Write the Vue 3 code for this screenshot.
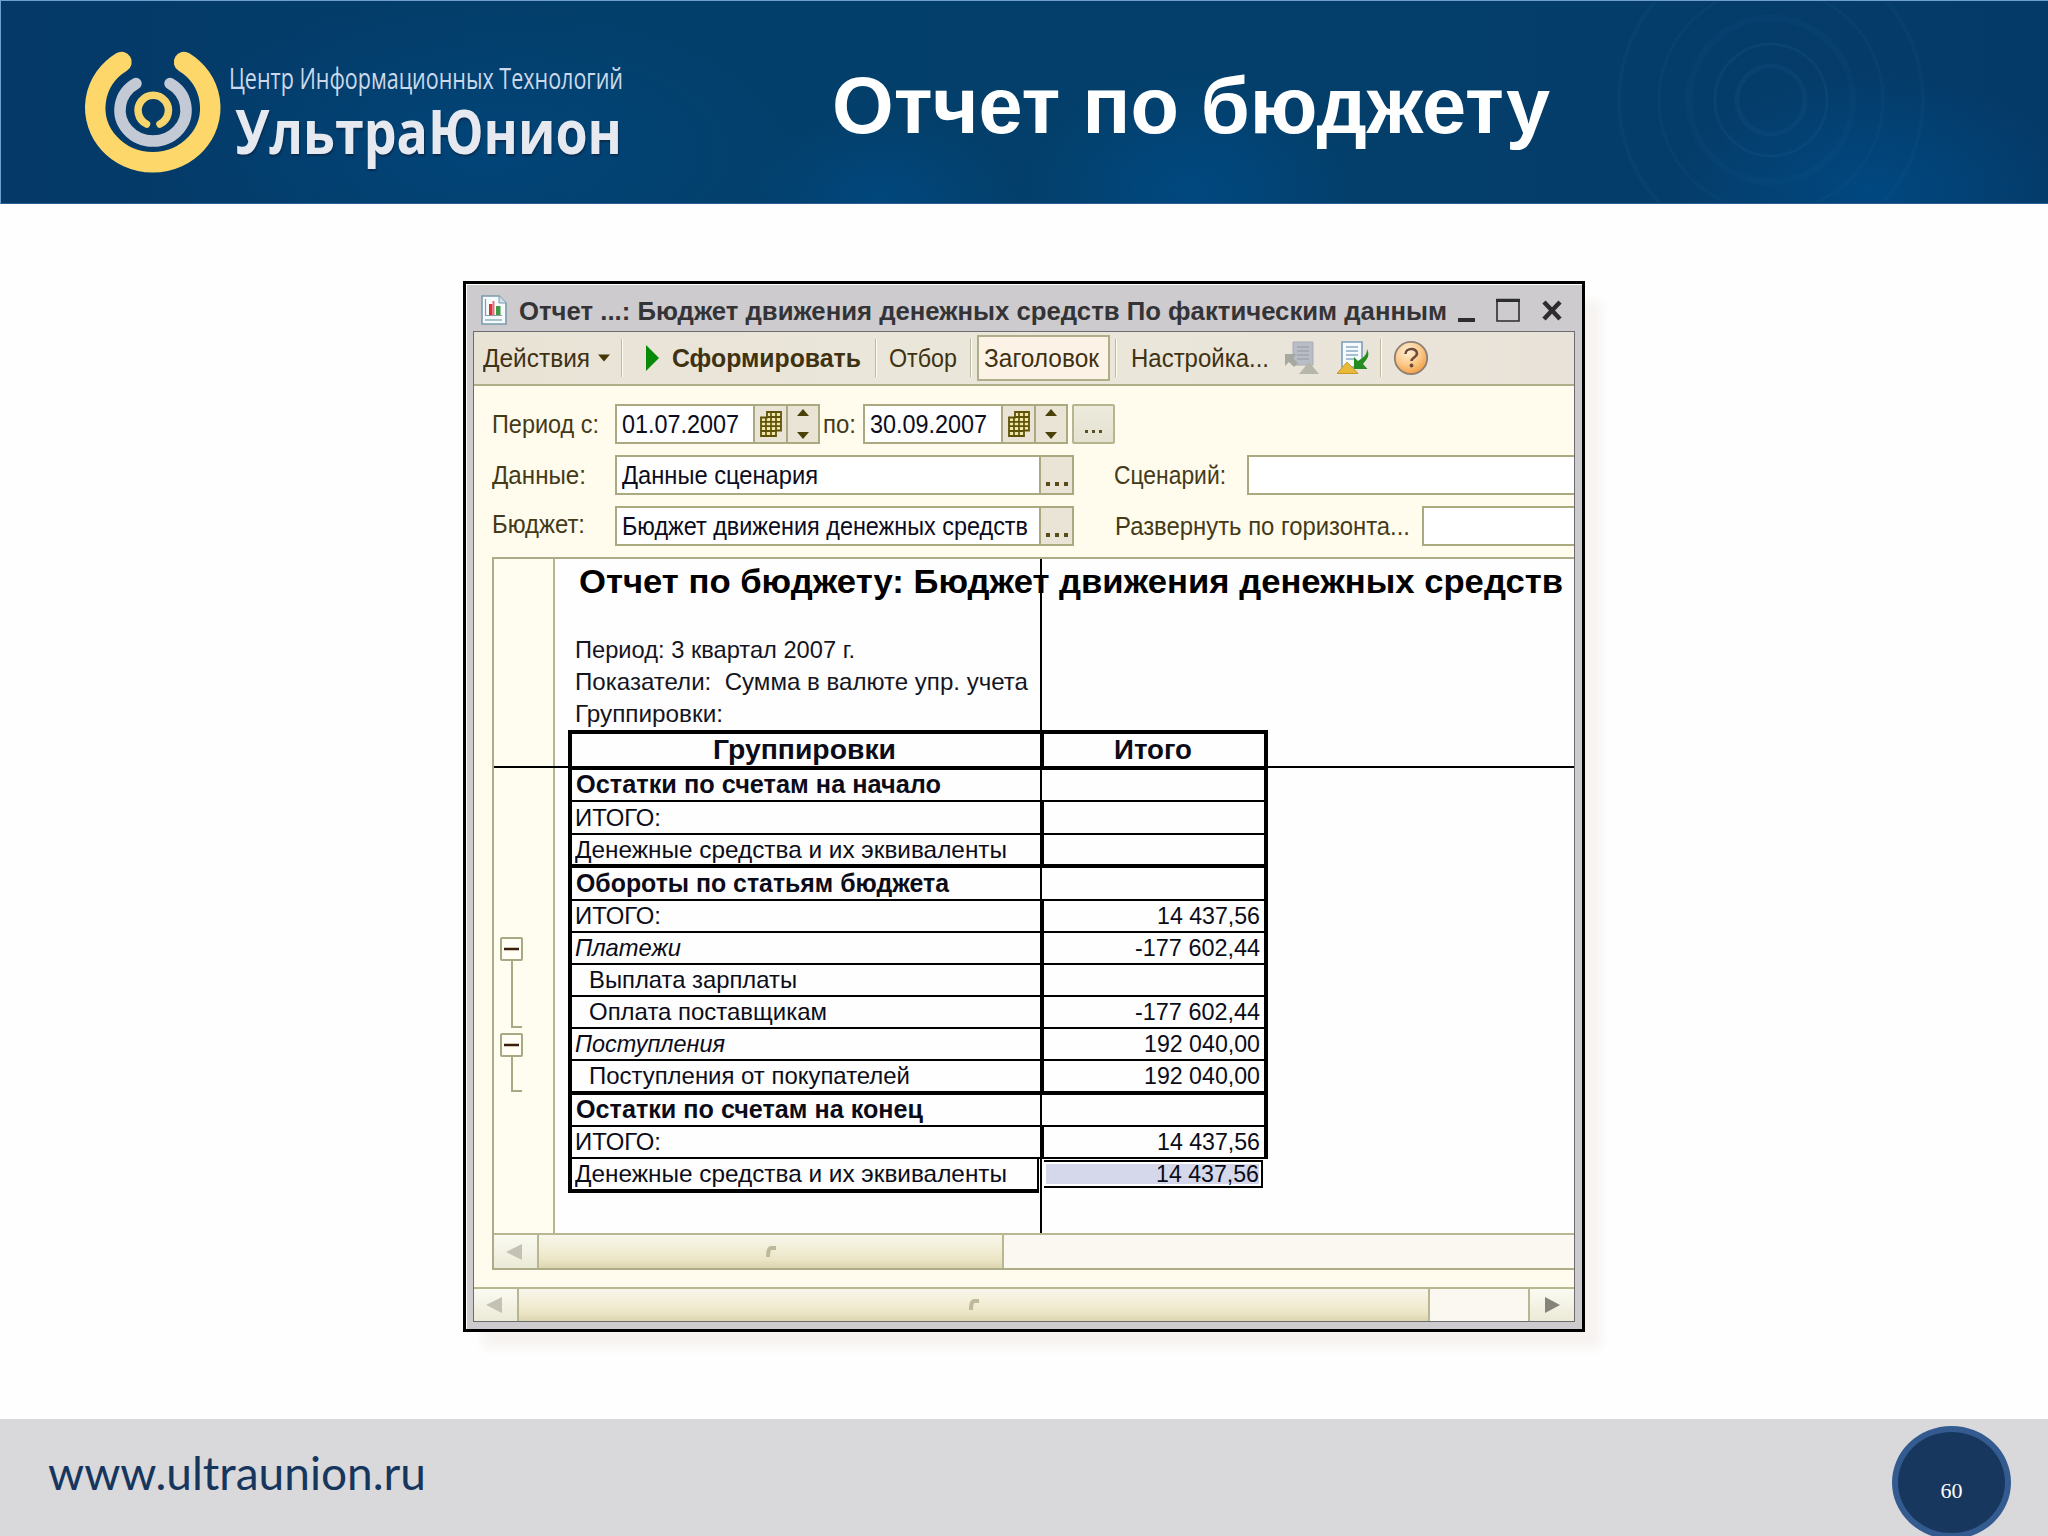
<script setup>
// Condenses or stretches a line of text to the given width in pixels.
const vFit = {
  mounted(el, { value }) {
    const natural = el.getBoundingClientRect().width
    el.style.transform = `scaleX(${value / natural})`
    el.style.marginRight = `${value - natural}px`
  },
}

const info = [
  { text: 'Период: 3 квартал 2007 г.', w: 280 },
  { text: 'Показатели:  Сумма в валюте упр. учета', w: 453 },
  { text: 'Группировки:', w: 148 },
]

const rows = [
  { text: 'Остатки по счетам на начало', w: 365, kind: 'bold', h: 32 },
  { text: 'ИТОГО:', w: 86, h: 33 },
  { text: 'Денежные средства и их эквиваленты', w: 432, h: 33, last: true },
  { text: 'Обороты по статьям бюджета', w: 373, kind: 'bold', h: 33 },
  { text: 'ИТОГО:', w: 86, h: 32, sum: '14 437,56', sw: 103 },
  { text: 'Платежи', w: 106, kind: 'italic', h: 32, sum: '-177 602,44', sw: 125 },
  { text: 'Выплата зарплаты', w: 208, kind: 'child', h: 32 },
  { text: 'Оплата поставщикам', w: 238, kind: 'child', h: 32, sum: '-177 602,44', sw: 125 },
  { text: 'Поступления', w: 150, kind: 'italic', h: 32, sum: '192 040,00', sw: 116 },
  { text: 'Поступления от покупателей', w: 321, kind: 'child', h: 34, last: true, sum: '192 040,00', sw: 116 },
  { text: 'Остатки по счетам на конец', w: 347, kind: 'bold', h: 32 },
  { text: 'ИТОГО:', w: 86, h: 32, sum: '14 437,56', sw: 103 },
  { text: 'Денежные средства и их эквиваленты', w: 432, h: 34, last: true, selected: true, sum: '14 437,56', sw: 103 },
]
</script>

<template>
  <div class="slide">
    <header class="banner">
      <svg class="rings" width="500" height="200" viewBox="0 0 500 200" fill="none" stroke="#1c6090">
        <circle cx="210" cy="98" r="34" stroke-width="5" opacity=".18" />
        <circle cx="210" cy="98" r="56" stroke-width="3" opacity=".2" />
        <circle cx="210" cy="98" r="82" stroke-width="7" opacity=".1" />
        <circle cx="210" cy="98" r="112" stroke-width="3" opacity=".15" />
        <circle cx="210" cy="98" r="152" stroke-width="4" opacity=".12" />
      </svg>
      <svg class="logo" width="144" height="130" viewBox="81 47 144 130" fill="none" stroke-linecap="round">
        <path d="M121.500 62A57.500 54.500 0 1 0 184 62" stroke="#fdd76a" stroke-width="20.500" />
        <path d="M136 83.500A33 31 0 1 0 170 83.500" stroke="#c3cad6" stroke-width="11.500" />
        <path d="M146.500 124A15.200 15.200 0 1 1 160 124" stroke="#f8d56c" stroke-width="7.500" />
      </svg>
      <div class="brand">
        <div class="brand-sub"><span v-fit="394" class="t">Центр Информационных Технологий</span></div>
        <div class="brand-name"><span v-fit="387" class="t">УльтраЮнион</span></div>
      </div>
      <h1><span v-fit="718" class="t">Отчет по бюджету</span></h1>
    </header>

    <main>
      <section class="window">
        <div class="titlebar">
          <svg width="26" height="30" viewBox="0 0 26 30">
            <path d="M1 1h17l7 7v21H1z" fill="#f6fafc" stroke="#7b9bb0" stroke-width="1.600" />
            <path d="M18 1v7h7" fill="#cfe0ea" stroke="#7b9bb0" />
            <path d="M4.500 4v17M4 20.500h17" stroke="#8a9aa5" stroke-width="1.200" />
            <path d="M8 9h3.500v11H8z" fill="#e03038" />
            <path d="M11.500 6h2v14h-2z" fill="#e0747a" />
            <path d="M15 11h4.500v9H15z" fill="#3f9a48" />
            <path d="M4 25h17" stroke="#a9c2d0" stroke-width="2" />
          </svg>
          <span v-fit="928" class="t title-text">Отчет ...: Бюджет движения денежных средств По фактическим данным</span>
          <svg class="win-btns" width="108" height="26" viewBox="0 0 108 26">
            <path d="M0 21h17v4H0z" fill="#2d2d2d" />
            <path d="M39 2.500h22V24H39z" fill="none" stroke="#2d2d2d" stroke-width="1.600" />
            <path d="M38 2h24v3H38z" fill="#2d2d2d" />
            <path d="M86 5l16 17M102 5l-16 17" stroke="#2d2d2d" stroke-width="4.500" />
          </svg>
        </div>

        <div class="client">
          <div class="toolbar">
            <div class="tool actions">
              <span v-fit="107" class="t">Действия</span>
              <svg width="12" height="8" viewBox="0 0 12 8"><path d="M0 0.500h12L6 7.500z" fill="#453808" /></svg>
            </div>
            <i class="sep"></i>
            <div class="tool run">
              <svg width="13" height="26" viewBox="0 0 13 26"><path d="M0 0l13 13L0 26z" fill="#068a08" /></svg>
              <span v-fit="189" class="t b">Сформировать</span>
            </div>
            <i class="sep"></i>
            <div class="tool filter"><span v-fit="68" class="t">Отбор</span></div>
            <i class="sep"></i>
            <div class="tool pressed"><span v-fit="115" class="t">Заголовок</span></div>
            <i class="sep"></i>
            <div class="tool settings"><span v-fit="138" class="t">Настройка...</span></div>
            <svg class="ico-save" width="34" height="34" viewBox="0 0 34 34">
              <path d="M8 1h20v23H8z" fill="#b9bec6" stroke="#a6acb4" />
              <path d="M12 6h12M12 10h12M12 14h12M12 18h12" stroke="#a0a6b1" stroke-width="1.300" />
              <path d="M0 13h12l-4 4 5 5-4 4-5-5-4 4z" fill="#a5a9a0" />
              <path d="M24 21l10 12H14z" fill="#b7b6aa" />
            </svg>
            <svg class="ico-load" width="32" height="34" viewBox="0 0 32 34">
              <path d="M5 1h20v25H5z" fill="#f6fafd" stroke="#7d9dbb" stroke-width="1.600" />
              <path d="M9 6h12M9 10h12M9 14h12M9 18h8" stroke="#8cabc4" stroke-width="1.500" />
              <path d="M17 28V16l4 4 5-3.500q4-3 4-8.500 3 6-.5 10.500L26 23l4.500 5z" fill="#268b20" />
              <path d="M10 21l11 11.500H0z" fill="#e9b93a" stroke="#c99a28" />
            </svg>
            <i class="sep"></i>
            <svg class="ico-help" width="36" height="36" viewBox="0 0 36 36">
              <defs>
                <radialGradient id="helpFill" cx=".4" cy=".3" r=".75">
                  <stop offset="0" stop-color="#fff0d4" />
                  <stop offset=".55" stop-color="#fbc989" />
                  <stop offset="1" stop-color="#f09a3c" />
                </radialGradient>
              </defs>
              <circle cx="18" cy="18" r="16.200" fill="url(#helpFill)" stroke="#8d7f76" stroke-width="1.800" />
              <path d="M12.500 14c0-6.500 11.500-6.500 11.500-.5 0 4-5.500 4-5.500 7.500" fill="none" stroke="#704a3a" stroke-width="2.600" />
              <circle cx="18.500" cy="25.500" r="1.900" fill="#704a3a" />
            </svg>
          </div>

          <div class="form">
            <div class="line period">
              <span class="label"><span v-fit="107" class="t">Период с:</span></span>
              <template v-for="(d, i) in ['01.07.2007', '30.09.2007']" :key="d">
                <span v-if="i" class="between"><span v-fit="33" class="t">по:</span></span>
                <div class="field date">
                  <span class="value"><span v-fit="117" class="t">{{ d }}</span></span>
                  <span class="btn">
                    <svg width="22" height="26" viewBox="0 0 22 24" preserveAspectRatio="none">
                      <path d="M7 1h14v17h-5v5H1V6h6z" fill="#f0e6a8" stroke="#5e5208" stroke-width="1.800" />
                      <path d="M7 5.500h14M1 10h20M1 14h20M1 18.500h15M6 6v17M11 1v22M16 1v17" stroke="#5e5208" stroke-width="1.700" />
                    </svg>
                  </span>
                  <span class="btn spin">
                    <svg width="12" height="30" viewBox="0 0 12 30"><path d="M6 0l6 7H0zM6 30l6-7H0z" fill="#4a4008" /></svg>
                  </span>
                </div>
              </template>
              <span class="more"><i></i><i></i><i></i></span>
            </div>

            <div class="line">
              <span class="label"><span v-fit="94" class="t">Данные:</span></span>
              <div class="field choice">
                <span class="value"><span v-fit="196" class="t">Данные сценария</span></span>
                <span class="btn dots"><i></i><i></i><i></i></span>
              </div>
              <span class="label2 scenario"><span v-fit="112" class="t">Сценарий:</span></span>
              <div class="field open"></div>
            </div>

            <div class="line budget">
              <span class="label"><span v-fit="93" class="t">Бюджет:</span></span>
              <div class="field choice">
                <span class="value"><span v-fit="406" class="t">Бюджет движения денежных средств</span></span>
                <span class="btn dots"><i></i><i></i><i></i></span>
              </div>
              <span class="label2 expand"><span v-fit="295" class="t">Развернуть по горизонта...</span></span>
              <div class="field open"></div>
            </div>
          </div>

          <div class="report">
            <div class="sheet">
              <div class="gutter">
                <svg width="24" height="158" viewBox="0 0 24 158" fill="none">
                  <path d="M12 23v67h10M12 120v34h10" stroke="#a9a884" stroke-width="2" />
                  <rect x="1" y="1" width="21" height="22" rx="1" fill="#fffef4" stroke="#a9a884" stroke-width="2" />
                  <rect x="1" y="97" width="21" height="22" rx="1" fill="#fffef4" stroke="#a9a884" stroke-width="2" />
                  <path d="M4 12h15M4 108h15" stroke="#3d1c0c" stroke-width="2.500" />
                </svg>
              </div>
              <div class="cells">
                <div class="report-title"><span v-fit="984" class="t">Отчет по бюджету: Бюджет движения денежных средств</span></div>
                <div v-for="l in info" :key="l.text" class="info"><span v-fit="l.w" class="t">{{ l.text }}</span></div>
                <div class="table">
                  <div class="row head">
                    <div class="name"><span v-fit="183" class="t">Группировки</span></div>
                    <div class="sum"><span v-fit="78" class="t">Итого</span></div>
                  </div>
                  <div
                    v-for="(r, i) in rows"
                    :key="i"
                    class="row"
                    :class="[r.kind, { last: r.last, selected: r.selected }]"
                    :style="{ height: r.h + 'px' }"
                  >
                    <div class="name"><span v-fit="r.w" class="t">{{ r.text }}</span></div>
                    <div class="sum"><span v-if="r.sum" v-fit="r.sw" class="t">{{ r.sum }}</span></div>
                  </div>
                </div>
              </div>
              <i class="freeze-v"></i>
              <i class="freeze-h"></i>
            </div>
            <div class="scroll inner">
              <span class="arrow"><svg width="16" height="16" viewBox="0 0 16 16"><path d="M16 0v16L0 8z" fill="#c3c2b4" /></svg></span>
              <span class="thumb"><svg width="10" height="12" viewBox="0 0 10 12"><path d="M10 2H5Q2 2 2 11" fill="none" stroke="#bdb99a" stroke-width="4" /></svg></span>
            </div>
          </div>

          <div class="scroll outer">
            <span class="arrow"><svg width="16" height="16" viewBox="0 0 16 16"><path d="M16 0v16L0 8z" fill="#c3c2b4" /></svg></span>
            <span class="thumb"><svg width="10" height="12" viewBox="0 0 10 12"><path d="M10 2H5Q2 2 2 11" fill="none" stroke="#bdb99a" stroke-width="4" /></svg></span>
            <span class="rest"></span>
            <span class="arrow right"><svg width="15" height="16" viewBox="0 0 15 16"><path d="M0 0v16l15-8z" fill="#85847a" /></svg></span>
          </div>
        </div>
      </section>
    </main>

    <footer>
      <span v-fit="378" class="t site">www.ultraunion.ru</span>
      <span class="page">60</span>
    </footer>
  </div>
</template>

<style>
body { margin: 0; background: #fff; }
</style>

<style scoped>
* { box-sizing: border-box; }
.slide {
  width: 2048px; height: 1536px; display: flex; flex-direction: column; overflow: hidden;
  background: #fefefe; font-family: "Liberation Sans", Arial, sans-serif; color: #000;
}
.t { display: inline-block; white-space: pre; transform-origin: 0 50%; }
svg { display: block; flex: none; }

.banner {
  position: relative; height: 204px; flex: none; display: flex; align-items: flex-start; overflow: hidden;
  border-top: 1px solid #6f9fd0; border-left: 1px solid #6f9fd0; border-bottom: 1px solid #2c5f92;
  background:
    radial-gradient(ellipse 330px 150px at 480px 150px, #00498199, transparent),
    radial-gradient(ellipse 170px 120px at 1190px 190px, #004b86cc, transparent),
    radial-gradient(ellipse 200px 120px at 1870px 190px, #004b86cc, transparent),
    radial-gradient(ellipse 140px 90px at 880px 200px, #004b86aa, transparent),
    linear-gradient(90deg, #043968, #033f6b 30%, #033f6a 60%, #053d6a 80%, #043a68);
}
.rings { position: absolute; right: -13px; top: 1px; }
.logo { margin: 46px 0 0 80px; }
.brand { width: 400px; margin-left: 4px; }
.brand-sub { margin-top: 56px; height: 41px; font: 29px/41px "Open Sans", sans-serif; color: #ccd9ea; }
.brand-name { padding-left: 6px; font: bold 61px/66px "Open Sans", sans-serif; color: #e6eaf0; text-shadow: 1px 2px 2px #0a2c50; }
h1 { margin: 55px 0 0 203px; font-size: 80px; line-height: 100px; color: #fff; }

main { flex: 1; min-height: 0; padding: 77px 0 0 463px; }
.window {
  width: 1122px; height: 1051px; border: 3px solid #000; background: #cdcbce; padding: 0 7px 7px 7px;
  display: flex; flex-direction: column; box-shadow: 18px 18px 10px -2px #f6f3f1, inset 1px 1px 0 #fff;
}
.titlebar { height: 47px; flex: none; display: flex; align-items: center; padding: 4px 0 0 8px; }
.titlebar .title-text { margin-left: 12px; font-size: 26px; font-weight: bold; line-height: 30px; position: relative; top: 1px; color: #343437; }
.win-btns { margin-left: 11px; }
.client { flex: 1; min-height: 0; border: 1px solid #6c6c70; background: #fffcee; display: flex; flex-direction: column; overflow: hidden; }

.toolbar {
  height: 54px; flex: none; display: flex; align-items: center; font-size: 26px; color: #3f3212;
  border-bottom: 2px solid #b0ae88; background: linear-gradient(90deg, #e9e3d6, #eae7da 50%, #e9e2d8);
}
.tool { display: flex; align-items: center; line-height: 30px; }
.actions { width: 147px; padding-left: 9px; gap: 8px; }
.run { width: 252px; padding-left: 23px; gap: 13px; }
.filter { width: 93px; padding-left: 12px; }
.pressed { width: 133px; height: 46px; margin: 0 5px 0 5px; padding-left: 5px; border: 2px solid #b0ae88; background: #fcf2e6; }
.settings { padding-left: 14px; width: 168px; }
.b { font-weight: bold; }
.sep { width: 2px; height: 38px; flex: none; background: linear-gradient(90deg, #bdb99c 50%, #fffdf0 50%); }
.ico-save { margin-right: 18px; }
.ico-load { margin-right: 11px; }
.ico-help { margin-left: 11px; }

.form { height: 171px; flex: none; padding: 18px 0 0 17px; font-size: 26px; color: #453a18; }
.line { display: flex; align-items: center; height: 40px; margin-bottom: 11px; }
.label { width: 124px; flex: none; display: flex; padding-left: 1px; }
.field { height: 40px; border: 2px solid #aba980; background: #fff; display: flex; }
.value { flex: 1; display: flex; align-items: center; padding-left: 5px; color: #0c0c20; }
.btn { width: 33px; flex: none; border-left: 2px solid #aba980; background: #e9e4d6; display: flex; align-items: center; justify-content: center; }
.spin { width: 32px; }
.date { width: 205px; }
.date .value { flex: 1; width: 0; }
.between { width: 43px; padding-left: 3px; display: flex; }
.more {
  width: 43px; height: 40px; margin-left: 4px; border: 2px solid #b7b590; border-radius: 2px; background: linear-gradient(#edebdc, #e4e1d0);
  display: flex; gap: 4px; justify-content: center; align-items: flex-end; padding-bottom: 9px;
}
.more i { width: 3px; height: 3px; background: #5a4f28; }
.choice { width: 459px; flex: none; }
.dots { gap: 5px; align-items: flex-end; padding-bottom: 7px; }
.dots i { width: 4px; height: 4px; background: #574b1a; }
.label2 { margin-left: 39px; flex: none; display: flex; padding-left: 1px; }
.scenario { width: 134px; }
.expand { width: 309px; padding-left: 2px; }
.open { flex: 1; border-right: 0; }
.budget .label { position: relative; top: -2px; }

.report { height: 713px; flex: none; margin-left: 18px; border: 2px solid #adab88; border-right: 0; display: flex; flex-direction: column; }
.sheet { position: relative; height: 674px; flex: none; display: flex; background: #fefefe; overflow: hidden; }
.gutter { width: 61px; flex: none; border-right: 2px solid #b6b492; background: #fffdf0; padding: 378px 0 0 6px; }
.cells { padding-left: 13px; }
.report-title { height: 75px; padding-left: 11px; font-size: 33px; font-weight: bold; line-height: 46px; white-space: nowrap; }
.info { height: 32px; line-height: 32px; padding-left: 7px; font-size: 24px; color: #15151f; }
.table { width: 700px; font-size: 24px; color: #0c0c18; }
.row { display: flex; border-left: 4px solid #000; border-right: 4px solid #000; border-bottom: 2px solid #000; }
.name { width: 468px; flex: none; display: flex; align-items: center; padding-left: 3px; }
.sum { flex: 1; display: flex; align-items: center; justify-content: flex-end; padding-right: 4px; border-left: 4px solid #000; }
.head { height: 40px; border-top: 4px solid #000; border-bottom-width: 4px; font-weight: bold; font-size: 28px; }
.head .name, .head .sum { justify-content: center; padding: 0 3px 0 0; }
.last { border-bottom-width: 4px; }
.bold .name { font-weight: bold; font-size: 26px; padding: 0 0 1px 4px; }
.bold .sum { border-left-width: 2px; }
.italic .name { font-style: italic; }
.child .name { padding-left: 17px; }
.selected { border-right: 0; border-bottom: 0; }
.selected .name { width: 467px; border-bottom: 4px solid #000; border-right: 2px solid #000; margin-right: 4px; }
.selected .sum {
  border: 2px solid #000; border-left: 0; margin: 1px 5px 5px 1px; padding: 0 2px 0 0; background: #d5d8ea; box-shadow: inset 0 0 0 2px #fff;
}
.freeze-v { position: absolute; left: 546px; top: 0; bottom: 0; width: 2px; background: #000; }
.freeze-h { position: absolute; left: 0; right: 0; top: 207px; height: 2px; background: #000; }

.scroll { display: flex; border-top: 2px solid #b9b792; background: #fbf8f1; }
.inner { flex: 1; }
.outer { height: 34px; margin-top: auto; flex: none; }
.arrow { width: 45px; flex: none; border-right: 2px solid #b9b792; padding-right: 4px; display: flex; align-items: center; justify-content: center; background: linear-gradient(#fbfaf2, #ebead6); }
.arrow.right { width: 44px; border: 0; padding: 0; }
.thumb { width: 465px; flex: none; border-right: 2px solid #b9b792; display: flex; align-items: center; justify-content: center; background: linear-gradient(#f8f6ec, #efebd0 55%, #ebe5c4 75%, #ddd5b0); }
.outer .thumb { width: 911px; }
.rest { flex: 1; border-right: 2px solid #b9b792; }

footer { position: relative; height: 117px; flex: none; background: #d9d8da; padding: 22px 0 0 48px; }
.site { font: 46px/64px Lato, sans-serif; color: #17365d; }
.page {
  position: absolute; left: 1892px; top: 7px; width: 119px; height: 113px; border-radius: 50%; border: 6px solid #335b90; background: #17375e;
  color: #fff; font: 22px/118px "Liberation Serif", serif; text-align: center;
}
</style>
